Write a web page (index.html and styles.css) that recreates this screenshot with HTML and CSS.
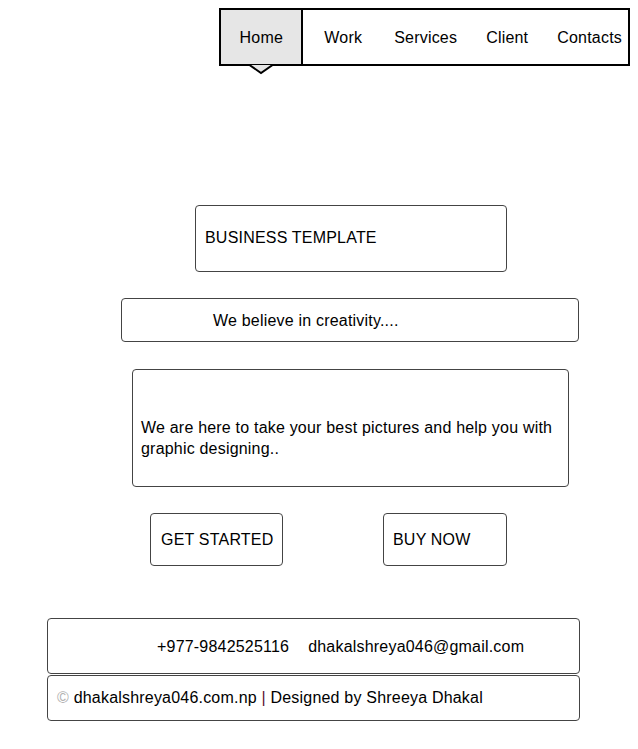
FILE: index.html
```html
<!DOCTYPE html>
<html lang="en">
<head>
<meta charset="utf-8">
<title>Business Template</title>
<link rel="stylesheet" href="styles.css">
</head>
<body>
<header class="header">
  <ul class="nav">
    <li class="nav-item active">Home
      <svg class="pointer" width="28" height="11" viewBox="0 0 28 11"><polygon points="1,0 14,9 27,0" fill="#e6e6e6" stroke="#000" stroke-width="2" stroke-linejoin="miter"/></svg>
    </li>
    <li class="nav-item work">Work</li>
    <li class="nav-item services">Services</li>
    <li class="nav-item">Client</li>
    <li class="nav-item last">Contacts</li>
  </ul>
</header>
<main class="main">
  <div class="box title">BUSINESS TEMPLATE</div>
  <div class="box tagline">We believe in creativity....</div>
  <div class="box about">We are here to take your best pictures and help you with graphic designing..</div>
  <div class="buttons">
    <div class="box btn btn-start">GET STARTED</div>
    <div class="box btn btn-buy">BUY NOW</div>
  </div>
</main>
<footer class="footer">
  <div class="box contact"><span>+977-9842525116</span><span class="email">dhakalshreya046@gmail.com</span></div>
  <div class="box copy"><span class="copy-sign">©</span> dhakalshreya046.com.np <span class="sep">|</span> Designed by Shreeya Dhakal</div>
</footer>
</body>
</html>
```
FILE: styles.css
```css
body {
  margin: 8px;
  font-family: "Liberation Sans", Arial, sans-serif;
  font-size: 16px;
  letter-spacing: 0.2px;
  color: #000;
  background: #fff;
}
.header {
  display: flex;
  justify-content: flex-end;
}
.nav {
  list-style: none;
  margin: 0;
  padding: 0;
  display: flex;
  border: 2px solid #000;
  height: 54px;
}
.nav-item {
  line-height: 53px;
  padding-top: 1px;
  margin-left: 29px;
  white-space: nowrap;
}
.nav-item.active {
  position: relative;
  margin-left: 0;
  width: 80px;
  text-align: center;
  background: #e6e6e6;
  border-right: 2px solid #000;
}
.nav-item.work {
  margin-left: 21px;
}
.nav-item.services {
  margin-left: 32px;
}
.nav-item.last {
  padding-right: 6px;
}
.pointer {
  position: absolute;
  left: 26px;
  top: 54px;
  display: block;
}
.main {
  margin-top: 139px;
}
.box {
  box-sizing: border-box;
  border: 1px solid #444;
  border-radius: 4px;
}
.title {
  margin-left: 187px;
  width: 312px;
  height: 67px;
  padding-left: 9px;
  padding-bottom: 1px;
  display: flex;
  align-items: center;
}
.tagline {
  margin-top: 26px;
  margin-left: 113px;
  width: 458px;
  height: 44px;
  padding-left: 91px;
  padding-top: 1px;
  display: flex;
  align-items: center;
}
.about {
  margin-top: 27px;
  margin-left: 124px;
  width: 437px;
  height: 118px;
  padding: 47px 8px 0 8px;
  line-height: 21.3px;
}
.buttons {
  margin-top: 26px;
  margin-left: 142px;
  display: flex;
  gap: 100px;
}
.btn {
  height: 53px;
  display: flex;
  align-items: center;
}
.btn-start {
  width: 133px;
  padding-left: 10px;
}
.btn-buy {
  width: 124px;
  padding-left: 9px;
}
.footer {
  margin-top: 52px;
  margin-left: 39px;
  width: 533px;
}
.contact {
  height: 56px;
  padding-left: 109px;
  padding-top: 1px;
  display: flex;
  align-items: center;
}
.email {
  margin-left: 19px;
}
.copy {
  margin-top: 1px;
  height: 46px;
  padding-left: 9px;
  display: flex;
  align-items: center;
  white-space: pre;
}
.copy-sign {
  color: #b0b0b0;
}
.sep {
  color: #5a0f2e;
}
```
